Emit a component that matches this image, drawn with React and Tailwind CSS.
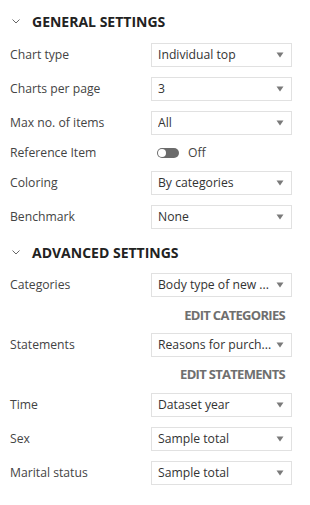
import React from "react";

function Select({ value }) {
  return (
    <div className="w-[141px] h-[24px] border border-[#e1e1e1] bg-white flex items-center pl-[6px] pr-[7px]">
      <span className="flex-1 whitespace-nowrap overflow-hidden text-[12.2px] text-[#333]">{value}</span>
      <svg width="8" height="6" viewBox="0 0 8 6" className="ml-[4px] shrink-0">
        <path d="M0.5 0.5 L7.5 0.5 L4 5.5 Z" fill="#7a7a7a" />
      </svg>
    </div>
  );
}

function Row({ label, children, h = "h-[24px]" }) {
  return (
    <div className={`flex items-center ${h} pl-[10px]`}>
      <span className="w-[141px] text-[12.2px] text-[#444]">{label}</span>
      {children}
    </div>
  );
}

function Header({ title }) {
  return (
    <div className="flex items-center h-[20px]">
      <svg width="8" height="5" viewBox="0 0 8 5" className="ml-[12px] mr-[12px]">
        <path d="M0.5 0.5 L4 4 L7.5 0.5" fill="none" stroke="#666" strokeWidth="1" />
      </svg>
      <span className="text-[14px] font-bold text-[#222]">{title}</span>
    </div>
  );
}

function EditLink({ text }) {
  return (
    <div className="flex justify-end pr-[25px] h-[20px] items-center">
      <span className="text-[13px] font-bold text-[#6f6f6f] tracking-[-0.7px]">{text}</span>
    </div>
  );
}

export default function App() {
  return (
    <div className="w-[310px] h-[505px] bg-white" style={{ fontFamily: '"Open Sans", sans-serif' }}>
      <div className="pt-[11px]">
        <Header title="GENERAL SETTINGS" />
        <div className="flex flex-col gap-[10px] mt-[12px]">
          <Row label="Chart type"><Select value="Individual top" /></Row>
          <Row label="Charts per page"><Select value="3" /></Row>
          <Row label="Max no. of items"><Select value="All" /></Row>
          <Row label="Reference Item" h="h-[16px]">
            <div className="flex items-center pl-[6px]">
              <div className="w-[22px] h-[10px] rounded-full bg-[#6b6b6b] relative">
                <div className="absolute left-[1px] top-[1px] w-[8px] h-[8px] rounded-full bg-white" />
              </div>
              <span className="ml-[9px] text-[12.2px] text-[#444]">Off</span>
            </div>
          </Row>
          <Row label="Coloring"><Select value="By categories" /></Row>
          <Row label="Benchmark"><Select value="None" /></Row>
        </div>
        <div className="mt-[13px]">
          <Header title="ADVANCED SETTINGS" />
        </div>
        <div className="flex flex-col mt-[11px]">
          <Row label="Categories"><Select value="Body type of new ..." /></Row>
          <div className="mt-[9px]"><EditLink text="EDIT CATEGORIES" /></div>
          <div className="mt-[7px]"><Row label="Statements"><Select value="Reasons for purch..." /></Row></div>
          <div className="mt-[8px]"><EditLink text="EDIT STATEMENTS" /></div>
          <div className="flex flex-col gap-[10px] mt-[8px]">
            <Row label="Time"><Select value="Dataset year" /></Row>
            <Row label="Sex"><Select value="Sample total" /></Row>
            <Row label="Marital status"><Select value="Sample total" /></Row>
          </div>
        </div>
      </div>
    </div>
  );
}
